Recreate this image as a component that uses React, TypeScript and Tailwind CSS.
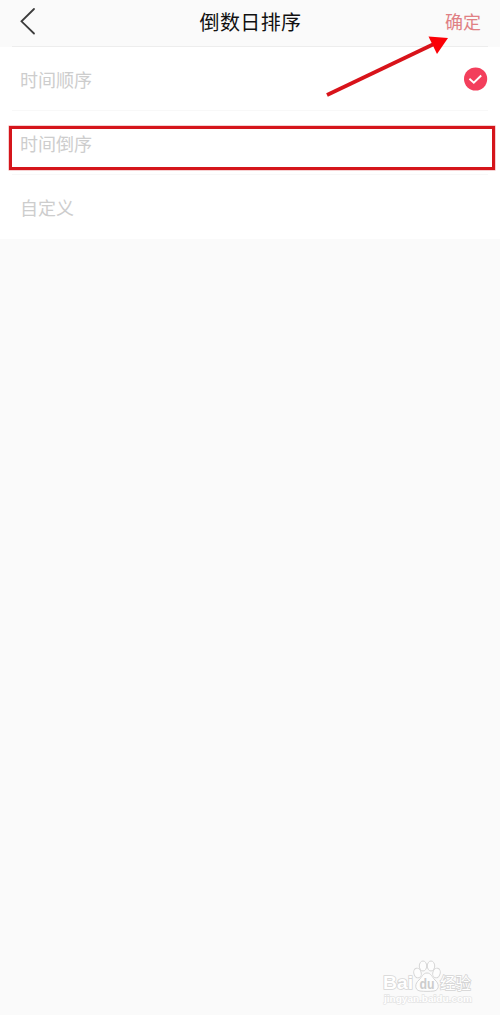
import React, { useState } from 'react'

const options = ['时间顺序', '时间倒序', '自定义']

function Header() {
  return (
    <header className="relative grid h-[47px] grid-cols-[1fr_auto_1fr] items-center bg-[#fafafa] pl-5 pr-[19px] pb-1.5">
      <button aria-label="返回" className="justify-self-start">
        <svg width="16" height="28" viewBox="0 0 16 28" fill="none" className="block">
          <path d="M14 2 1.5 14.3 14 26.5" stroke="#3c3c3c" strokeWidth="1.8" strokeLinecap="round" />
        </svg>
      </button>
      <h1 className="pt-[3px] text-[20px] leading-[30px] tracking-[0.4px] text-[#111111]">倒数日排序</h1>
      <button className="justify-self-end text-[18px] leading-[26px] text-[#e08084]">确定</button>
      <div className="absolute bottom-0 left-3 right-3 h-px bg-[#ededed]" />
    </header>
  )
}

function CheckMark() {
  return (
    <svg width="24" height="24" viewBox="0 0 24 24" fill="none">
      <circle cx="11.6" cy="12" r="11.6" fill="#f33f5c" />
      <path d="m5.4 11.8 4.4 4 7.4-7.3" stroke="#fff" strokeWidth="1.9" />
    </svg>
  )
}

function Watermark() {
  return (
    <svg className="absolute bottom-2 left-[380px]" width="96" height="50" viewBox="0 0 96 50">
      <g fill="#fdfdfd" stroke="#d6d6d6" strokeWidth="1">
        <ellipse cx="37.5" cy="16" rx="3.7" ry="4.9" transform="rotate(-15 37.5 16)" />
        <ellipse cx="43" cy="9" rx="3.7" ry="5" />
        <ellipse cx="51" cy="9" rx="3.7" ry="5" />
        <ellipse cx="56.5" cy="16" rx="3.7" ry="4.9" transform="rotate(15 56.5 16)" />
        <path d="M47 16c-4 0-5 4-8 7-4 3-5 10 1 11 4 .5 10 .5 14 0 6-1 5-8 1-11-3-3-4-7-8-7Z" />
      </g>
      <g fontFamily="'Liberation Sans', 'Noto Sans CJK SC', sans-serif" fontWeight="bold">
        <text x="3" y="32" fontSize="19" fill="#fff" stroke="#d6d6d6" strokeWidth="1.6" paintOrder="stroke" textLength="30" lengthAdjust="spacingAndGlyphs">Bai</text>
        <text x="39.5" y="32" fontSize="14" fill="#cccccc" textLength="15" lengthAdjust="spacingAndGlyphs">du</text>
        <text x="60" y="31.5" fontSize="15.5" fill="#fff" stroke="#d4d4d4" strokeWidth="1.5" paintOrder="stroke" fontWeight="normal">经验</text>
        <text x="4" y="44.5" fontSize="9.5" fill="#fff" stroke="#e4e4e4" strokeWidth="1.3" paintOrder="stroke" textLength="88" lengthAdjust="spacingAndGlyphs">jingyan.baidu.com</text>
      </g>
    </svg>
  )
}

export default function App() {
  const [selected, setSelected] = useState(0)

  return (
    <div className="relative h-[1015px] w-[500px] overflow-hidden bg-[#fafafa] font-['Noto_Sans_CJK_SC',sans-serif]">
      <Header />
      <ul className="bg-white">
        {options.map((label, i) => (
          <li
            key={label}
            onClick={() => setSelected(i)}
            className="mx-3 flex h-16 items-center justify-between border-b border-[#f8f8f8] pl-2 last:border-b-0"
          >
            <span className="text-[18px] leading-[26px] text-[#cdcdcd]">{label}</span>
            {selected === i && <CheckMark />}
          </li>
        ))}
      </ul>

      {/* Tutorial annotations */}
      <div className="pointer-events-none absolute left-[9px] top-[126px] h-[44px] w-[486px] border-[3.5px] border-[#d5151b] ring-[0.5px] ring-[#d5151b]/40" />
      <svg className="pointer-events-none absolute left-[320px] top-[30px]" width="136" height="70" viewBox="0 0 136 70">
        <path d="M7 65 116 13" stroke="#d8131a" strokeWidth="3.8" />
        <path d="M128 8 108.5 6.5 117 24Z" fill="#fb0006" />
      </svg>

      <Watermark />
    </div>
  )
}
